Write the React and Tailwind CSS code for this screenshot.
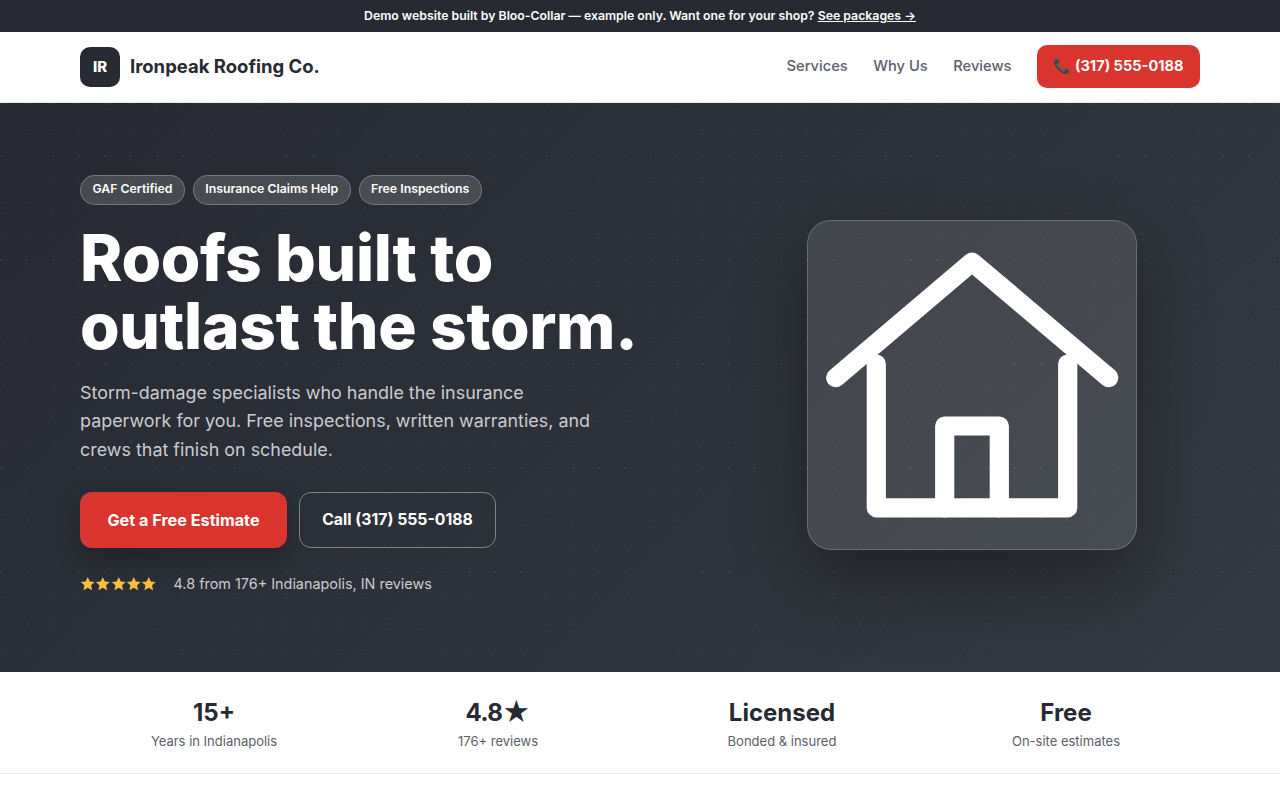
const HEADING = "font-['Inter',sans-serif]";

const stats = [
  { value: "15+", label: "Years in Indianapolis" },
  { value: "4.8", star: true, label: "176+ reviews" },
  { value: "Licensed", label: "Bonded & insured" },
  { value: "Free", label: "On-site estimates" },
];

const badges = ["GAF Certified", "Insurance Claims Help", "Free Inspections"];

function Star() {
  return (
    <svg viewBox="0 0 24 24" className="w-[15.5px] h-[15.5px] -mx-[0.1px] fill-[#fbbf3c]">
      <path d="M12 1.4l3.2 7 7.6.8-5.7 5.1 1.6 7.6-6.7-3.9-6.7 3.9 1.6-7.6-5.7-5.1 7.6-.8z" />
    </svg>
  );
}

export default function App() {
  return (
    <div className="min-h-[800px] bg-white font-['Inter',sans-serif] text-[#272a32]">
      <div className="h-8 bg-[#272a32] flex items-center justify-center text-white text-[12.3px] font-semibold">
        <span>
          Demo website built by Bloo-Collar — example only. Want one for your shop?{" "}
          <a href="#" className="underline">See packages →</a>
        </span>
      </div>

      <header className="h-[71px] bg-white border-b border-[#e5e7eb]">
        <div className="w-[1120px] mx-auto h-[70px] flex items-center justify-between">
          <div className="flex items-center gap-2.5">
            <div className={`w-10 h-10 rounded-[10px] bg-[#272a32] text-white flex items-center justify-center text-[15px] font-extrabold ${HEADING}`}>
              IR
            </div>
            <span className={`text-[18.5px] font-bold mb-px ${HEADING}`}>Ironpeak Roofing Co.</span>
          </div>
          <nav className="flex items-center gap-[25.5px] mb-px">
            <a href="#" className="text-[14.7px] font-medium text-[#5b606b]">Services</a>
            <a href="#" className="text-[14.7px] font-medium text-[#5b606b]">Why Us</a>
            <a href="#" className="text-[14.7px] font-medium text-[#5b606b]">Reviews</a>
            <a href="#" className="w-[163px] h-[43px] rounded-[10px] bg-[#d9342d] text-white text-[14.6px] font-bold flex items-center justify-center">
              📞 (317) 555-0188
            </a>
          </nav>
        </div>
      </header>

      <section className="h-[569px] bg-[linear-gradient(135deg,#262931,#353941)]">
        <div className="h-full bg-[radial-gradient(circle_at_1px_1px,rgba(255,255,255,0.05)_1px,transparent_0)] bg-[size:26px_26px]">
          <div className="w-[1120px] mx-auto pt-[72px] grid grid-cols-[616px_456px] gap-12 items-start">
            <div>
              <div className="flex gap-2">
                {badges.map((badge) => (
                  <span key={badge} className="h-[30px] px-[11.4px] pb-px rounded-full bg-white/15 border border-white/25 text-white text-[12.3px] font-semibold flex items-center">
                    {badge}
                  </span>
                ))}
              </div>
              <h1 className={`mt-[19px] text-white text-[64px] leading-[68px] font-extrabold tracking-[-0.3px] ${HEADING}`}>
                Roofs built to<br />outlast the storm.
              </h1>
              <p className="mt-[18.6px] w-[540px] text-[17.92px] leading-[28.8px] text-[#c9ccd2]">
                Storm-damage specialists who handle the insurance paperwork for you. Free inspections, written warranties, and crews that finish on schedule.
              </p>
              <div className="mt-[27.4px] flex gap-3">
                <a href="#" className="w-[207px] h-14 pb-px rounded-xl bg-[#d9342d] text-white text-[16.2px] font-bold flex items-center justify-center shadow-[0_10px_24px_rgba(0,0,0,0.25)]">
                  Get a Free Estimate
                </a>
                <a href="#" className="w-[197px] h-14 pb-px rounded-xl border border-white/40 text-white text-[15.8px] font-bold flex items-center justify-center">
                  Call (317) 555-0188
                </a>
              </div>
              <div className="mt-[25px] flex items-center gap-[17px]">
                <div className="flex"><Star /><Star /><Star /><Star /><Star /></div>
                <span className="text-[14.4px] text-[#c9ccd2]">4.8 from 176+ Indianapolis, IN reviews</span>
              </div>
            </div>
            <div className="flex justify-center mt-[45px]">
              <div className="w-[330px] h-[330px] rounded-3xl bg-white/10 border border-white/20 shadow-[0_30px_70px_rgba(0,0,0,0.35)]">
                <svg viewBox="0 0 328 328" className="w-full h-full" fill="none" stroke="white" strokeWidth="19.2" strokeLinecap="round" strokeLinejoin="round">
                  <path d="M27.7 156.7 164 41 300.7 156.7" />
                  <path d="M68.3 143V286.8H259.7V143" />
                  <path d="M136.7 286.8V205H191.3V286.8" />
                </svg>
              </div>
            </div>
          </div>
        </div>
      </section>

      <section className="h-[102px] bg-white border-b border-[#e5e7eb]">
        <div className="w-[1120px] mx-auto grid grid-cols-4 gap-4 pt-[25px]">
          {stats.map((stat) => (
            <div key={stat.label} className="text-center">
              <div className={`text-[24px] leading-[32px] font-bold ${HEADING}`}>
                <span className={stat.star ? "tracking-[-0.6px]" : ""}>{stat.value}</span>
                {stat.star && <span className="text-[27px] leading-none align-[-1px]">★</span>}
              </div>
              <div className="mt-[2px] text-[13px] leading-5 text-[#5b606b]">{stat.label}</div>
            </div>
          ))}
        </div>
      </section>
    </div>
  );
}
